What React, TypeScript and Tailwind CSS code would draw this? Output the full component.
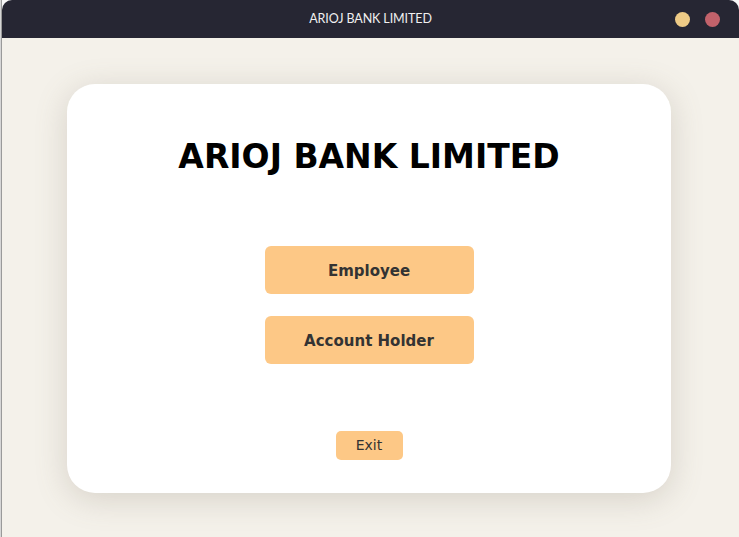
export default function App() {
  return (
    <div className="flex h-[537px] w-[739px] overflow-hidden bg-[#f7f7f7]">
      {/* sliver of the window behind */}
      <div className="w-[2px] shrink-0 border-r border-[#9a9a9a] bg-[#d6d6d6]" />

      <div className="flex flex-1 flex-col">
        {/* title bar */}
        <div className="relative flex h-[38px] shrink-0 items-center justify-center rounded-t-[10px] bg-[#262633]">
          <span className="font-['Lato',sans-serif] text-[12.5px] tracking-[-0.1px] text-[#f0f0f0]">
            ARIOJ BANK LIMITED
          </span>
          <div className="absolute right-[19px] top-[12px] flex gap-[15px]">
            <span className="h-[15px] w-[15px] rounded-full bg-[#edca86]" />
            <span className="h-[15px] w-[15px] rounded-full bg-[#c2626b]" />
          </div>
        </div>

        {/* body */}
        <div className="flex-1 bg-[#f4f1ea] pl-[65px] pt-[46px]">
          <div className="flex h-[409px] w-[604px] flex-col items-center rounded-[28px] bg-white pt-[53px] shadow-[0_6px_32px_rgba(120,110,90,0.24)]">
            <h1 className="font-['DejaVu_Sans',sans-serif] text-[33px] font-bold leading-[40px] text-black">
              ARIOJ BANK LIMITED
            </h1>

            <div className="mt-[69px] flex flex-col gap-[22px]">
              <button className="h-[48px] w-[209px] rounded-[6px] bg-[#fdc886] pt-[3px] font-['DejaVu_Sans',sans-serif] text-[15px] font-bold text-[#333333]">
                Employee
              </button>
              <button className="h-[48px] w-[209px] rounded-[6px] bg-[#fdc886] pt-[3px] font-['DejaVu_Sans',sans-serif] text-[15px] font-bold text-[#333333]">
                Account Holder
              </button>
            </div>

            <button className="mt-[67px] h-[29px] w-[67px] rounded-[5px] bg-[#fdc886] font-['DejaVu_Sans',sans-serif] text-[14px] text-[#333333]">
              Exit
            </button>
          </div>
        </div>
      </div>
    </div>
  );
}
